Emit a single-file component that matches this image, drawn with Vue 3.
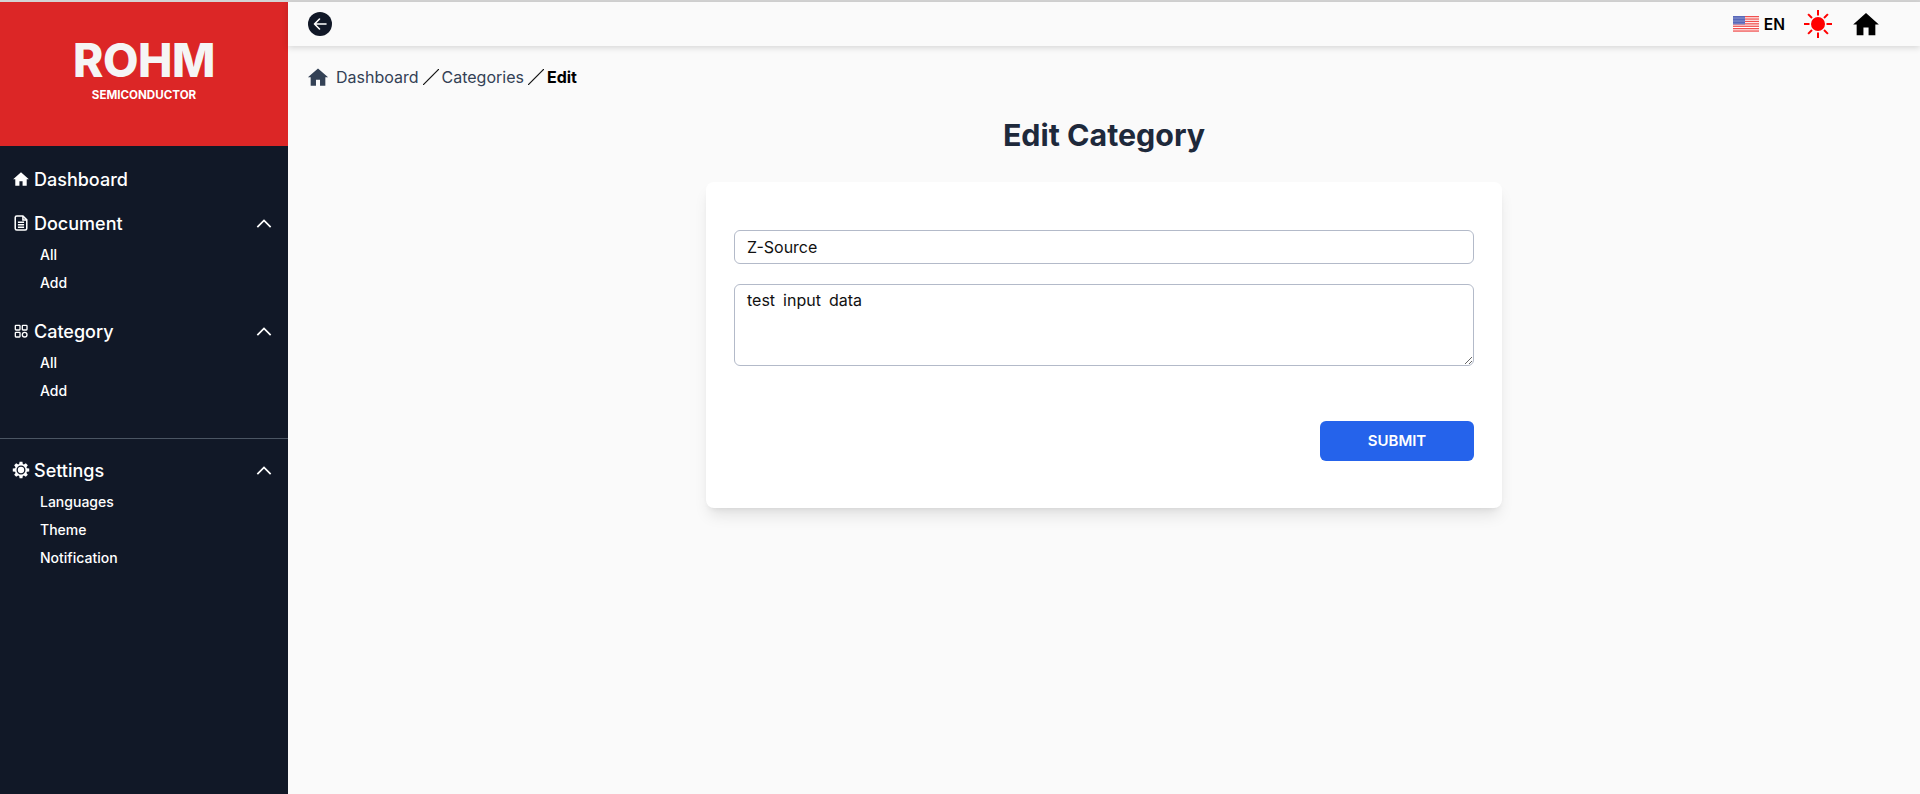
<script setup>
import { ref } from "vue";

const name = ref("Z-Source");
const description = ref("test input data");

const groups = [
  { title: "Document", icon: "doc", links: ["All", "Add"] },
  { title: "Category", icon: "grid", links: ["All", "Add"] },
];
const settings = { title: "Settings", links: ["Languages", "Theme", "Notification"] };
const stripes = [0, 1, 2, 3, 4, 5, 6];
const stars = [];
for (let y = 1.2; y < 8; y += 1.5) {
  for (let x = 1; x < 12; x += 2) stars.push({ x, y });
}
const rays = [0, 45, 90, 135, 180, 225, 270, 315];
const homePath = "M12 2.6 1 12.4h3v9.2h5.8v-6.6h4.4v6.6H20v-9.2h3z";

// eight tooth gear outline around the centre of a 24 box
const gearPath = (() => {
  const pts = [];
  for (let i = 0; i < 8; i++) {
    const a = (i * Math.PI) / 4;
    [[-0.3, 7.4], [-0.17, 10], [0.17, 10], [0.3, 7.4]].forEach(([d, r]) => {
      pts.push(`${(12 + r * Math.cos(a + d)).toFixed(2)} ${(12 + r * Math.sin(a + d)).toFixed(2)}`);
    });
  }
  return "M" + pts.join("L") + "z";
})();
</script>

<template>
  <div class="page">
    <aside class="sidebar">
      <div class="brand">
        <div class="brand-name">ROHM</div>
        <div class="brand-sub">SEMICONDUCTOR</div>
      </div>
      <nav class="nav">
        <a class="nav-head dash">
          <svg class="nav-icon" viewBox="-2 -2 28 28"><path :d="homePath" fill="#fff" /></svg>
          <span>Dashboard</span>
        </a>
        <div v-for="g in groups" :key="g.title" class="group">
          <a class="nav-head">
            <svg v-if="g.icon === 'doc'" class="nav-icon" viewBox="-1 -1 26 26" fill="none" stroke="#fff" stroke-width="2">
              <path d="M4.500 5a2 2 0 0 1 2-2h8l5 5v11a2 2 0 0 1-2 2h-11a2 2 0 0 1-2-2z" />
              <path d="M14.500 3v5h5M8 11h8M8 14.200h8M8 17.400h8" />
            </svg>
            <svg v-else class="nav-icon" viewBox="-3 -3 30 30" fill="none" stroke="#fff" stroke-width="2">
              <rect x="3.500" y="3.500" width="7" height="7" rx="1" />
              <rect x="14" y="3.500" width="7" height="7" rx="1" />
              <rect x="3.500" y="14" width="7" height="7" rx="1" />
              <circle cx="17.500" cy="17.500" r="3.500" />
            </svg>
            <span>{{ g.title }}</span>
            <svg class="chevron" viewBox="0 0 18 12" fill="none" stroke="#fff" stroke-width="2"><path d="M1.500 10 9 2.500 16.500 10" /></svg>
          </a>
          <a v-for="l in g.links" :key="l" class="nav-link">{{ l }}</a>
        </div>
      </nav>
      <div class="divider"></div>
      <nav class="nav settings">
        <div class="group">
          <a class="nav-head">
            <svg class="nav-icon" viewBox="0 0 24 24">
              <path :d="gearPath" fill="#fff" />
              <circle cx="12" cy="12" r="4.600" fill="none" stroke="#111827" stroke-width="1.600" />
            </svg>
            <span>{{ settings.title }}</span>
            <svg class="chevron" viewBox="0 0 18 12" fill="none" stroke="#fff" stroke-width="2"><path d="M1.500 10 9 2.500 16.500 10" /></svg>
          </a>
          <a v-for="l in settings.links" :key="l" class="nav-link">{{ l }}</a>
        </div>
      </nav>
    </aside>

    <div class="main">
      <header class="topbar">
        <button class="back">
          <svg viewBox="0 0 24 24" fill="none" stroke="#fff" stroke-width="1.600" stroke-linecap="round" stroke-linejoin="round"><path d="M18 12H6.500M11.500 7 6.500 12l5 5" /></svg>
        </button>
        <div class="top-right">
          <div class="lang">
            <svg class="flag" viewBox="0 0 26 16">
              <rect width="26" height="16" fill="#fff" />
              <rect v-for="s in stripes" :key="s" x="0" :y="s * 2.4" width="26" height="1.300" fill="#f0504f" />
              <rect width="12" height="8.400" fill="#5565b8" />
              <circle v-for="(p, i) in stars" :key="i" :cx="p.x" :cy="p.y" r="0.400" fill="#fff" />
            </svg>
            <span>EN</span>
          </div>
          <svg class="sun" viewBox="0 0 28 28">
            <circle cx="14" cy="14" r="7" fill="#f00" />
            <rect v-for="r in rays" :key="r" x="13" y="0" width="2" height="5.500" fill="#f00" :transform="`rotate(${r} 14 14)`" />
          </svg>
          <svg class="home" viewBox="0 0 24 24"><path :d="homePath" fill="#000" /></svg>
        </div>
      </header>

      <div class="crumbs">
        <svg class="crumb-home" viewBox="0 0 24 24"><path :d="homePath" fill="#334155" /></svg>
        <a>Dashboard</a>
        <svg class="slash" viewBox="0 0 16 16"><path d="M0 16 16 0" stroke="#111" stroke-width="1.200" /></svg>
        <a>Categories</a>
        <svg class="slash" viewBox="0 0 16 16"><path d="M0 16 16 0" stroke="#111" stroke-width="1.200" /></svg>
        <b>Edit</b>
      </div>

      <h1 class="title">Edit Category</h1>

      <form class="card" @submit.prevent>
        <input v-model="name" class="field" type="text" />
        <textarea v-model="description" class="field area"></textarea>
        <div class="actions">
          <button class="submit" type="submit">SUBMIT</button>
        </div>
      </form>
    </div>
  </div>
</template>

<style>
html, body {
  margin: 0;
  height: 100%;
  overflow: hidden;
}
</style>

<style scoped>
.page {
  display: flex;
  height: 794px;
  box-sizing: border-box;
  border-top: 2px solid #d4d4d4;
  font-family: Inter, "Noto Sans", sans-serif;
  background: #fafafa;
}

.sidebar {
  width: 288px;
  flex-shrink: 0;
  background: #111827;
  color: #fff;
}

.brand {
  height: 144px;
  background: #dc2626;
  display: flex;
  flex-direction: column;
  align-items: center;
  padding-top: 35px;
  box-sizing: border-box;
}
.brand-name {
  font-size: 46px;
  font-weight: 800;
  line-height: 46px;
  color: #f5f5f5;
  letter-spacing: -0.5px;
}
.brand-sub {
  font-size: 11.600px;
  font-weight: 700;
  margin-top: 5px;
  line-height: 14px;
}

.nav {
  padding: 21px 0 0 11px;
}
.nav-head {
  display: flex;
  align-items: center;
  height: 24px;
  font-size: 18px;
  font-weight: 500;
  margin-bottom: 6px;
}
.dash {
  margin-bottom: 20px;
}
.nav-icon {
  width: 20px;
  height: 20px;
  margin-right: 3px;
  flex-shrink: 0;
}
.chevron {
  width: 16px;
  height: 11px;
  margin-left: auto;
  margin-right: 16px;
}
.group {
  margin-bottom: 22px;
}
.nav-link {
  display: block;
  padding-left: 29px;
  font-size: 14px;
  font-weight: 500;
  line-height: 28px;
}

.divider {
  height: 1px;
  background: #4b5563;
  margin-top: 33px;
}
.settings {
  padding-top: 19px;
}

.main {
  flex: 1;
  min-width: 0;
}

.topbar {
  height: 44px;
  display: flex;
  align-items: center;
  justify-content: space-between;
  padding: 0 40px 0 20px;
  background: #fafafa;
  box-shadow: 0 2px 6px rgba(0, 0, 0, 0.14);
}
.back {
  width: 24px;
  height: 24px;
  border: none;
  border-radius: 50%;
  background: #111827;
  padding: 0;
  display: flex;
}
.top-right {
  display: flex;
  align-items: center;
}
.lang {
  display: flex;
  align-items: center;
  gap: 5px;
  font-size: 15.500px;
  font-weight: 600;
  color: #000;
}
.flag {
  width: 26px;
  height: 16px;
}
.sun {
  width: 28px;
  height: 28px;
  margin-left: 19px;
}
.home {
  width: 28px;
  height: 28px;
  margin-left: 20px;
}

.crumbs {
  display: flex;
  align-items: center;
  padding: 19px 0 0 19px;
  font-size: 16px;
  color: #334155;
  line-height: 24px;
}
.crumb-home {
  width: 22px;
  height: 22px;
  margin-right: 7px;
}
.slash {
  width: 16px;
  height: 16px;
  margin: 0 3px 0 4px;
}
.crumbs b {
  color: #000;
  font-weight: 700;
}

.title {
  margin: 28px 0 0;
  text-align: center;
  font-size: 30.400px;
  line-height: 36px;
  font-weight: 700;
  color: #1e293b;
}

.card {
  width: 796px;
  height: 326px;
  box-sizing: border-box;
  margin: 29px auto 0;
  padding: 48px 28px 0;
  background: #fff;
  border-radius: 8px;
  box-shadow: 0 10px 15px -3px rgba(0, 0, 0, 0.1), 0 4px 6px -4px rgba(0, 0, 0, 0.1);
  display: flex;
  flex-direction: column;
}
.field {
  display: block;
  width: 100%;
  height: 34px;
  box-sizing: border-box;
  border: 1px solid #b3bac9;
  border-radius: 6px;
  padding: 0 12px 1px;
  font: inherit;
  font-size: 16px;
  color: #111;
  background: #fff;
  outline: none;
  word-spacing: 3.500px;
}
.area {
  height: 82px;
  margin-top: 20px;
  padding-top: 3px;
  line-height: 24px;
}
.actions {
  display: flex;
  justify-content: flex-end;
  margin-top: 55px;
}
.submit {
  width: 154px;
  height: 40px;
  border: none;
  border-radius: 6px;
  background: #2563eb;
  color: #fff;
  font: inherit;
  font-size: 15px;
  font-weight: 600;
  padding-bottom: 3px;
}
</style>
